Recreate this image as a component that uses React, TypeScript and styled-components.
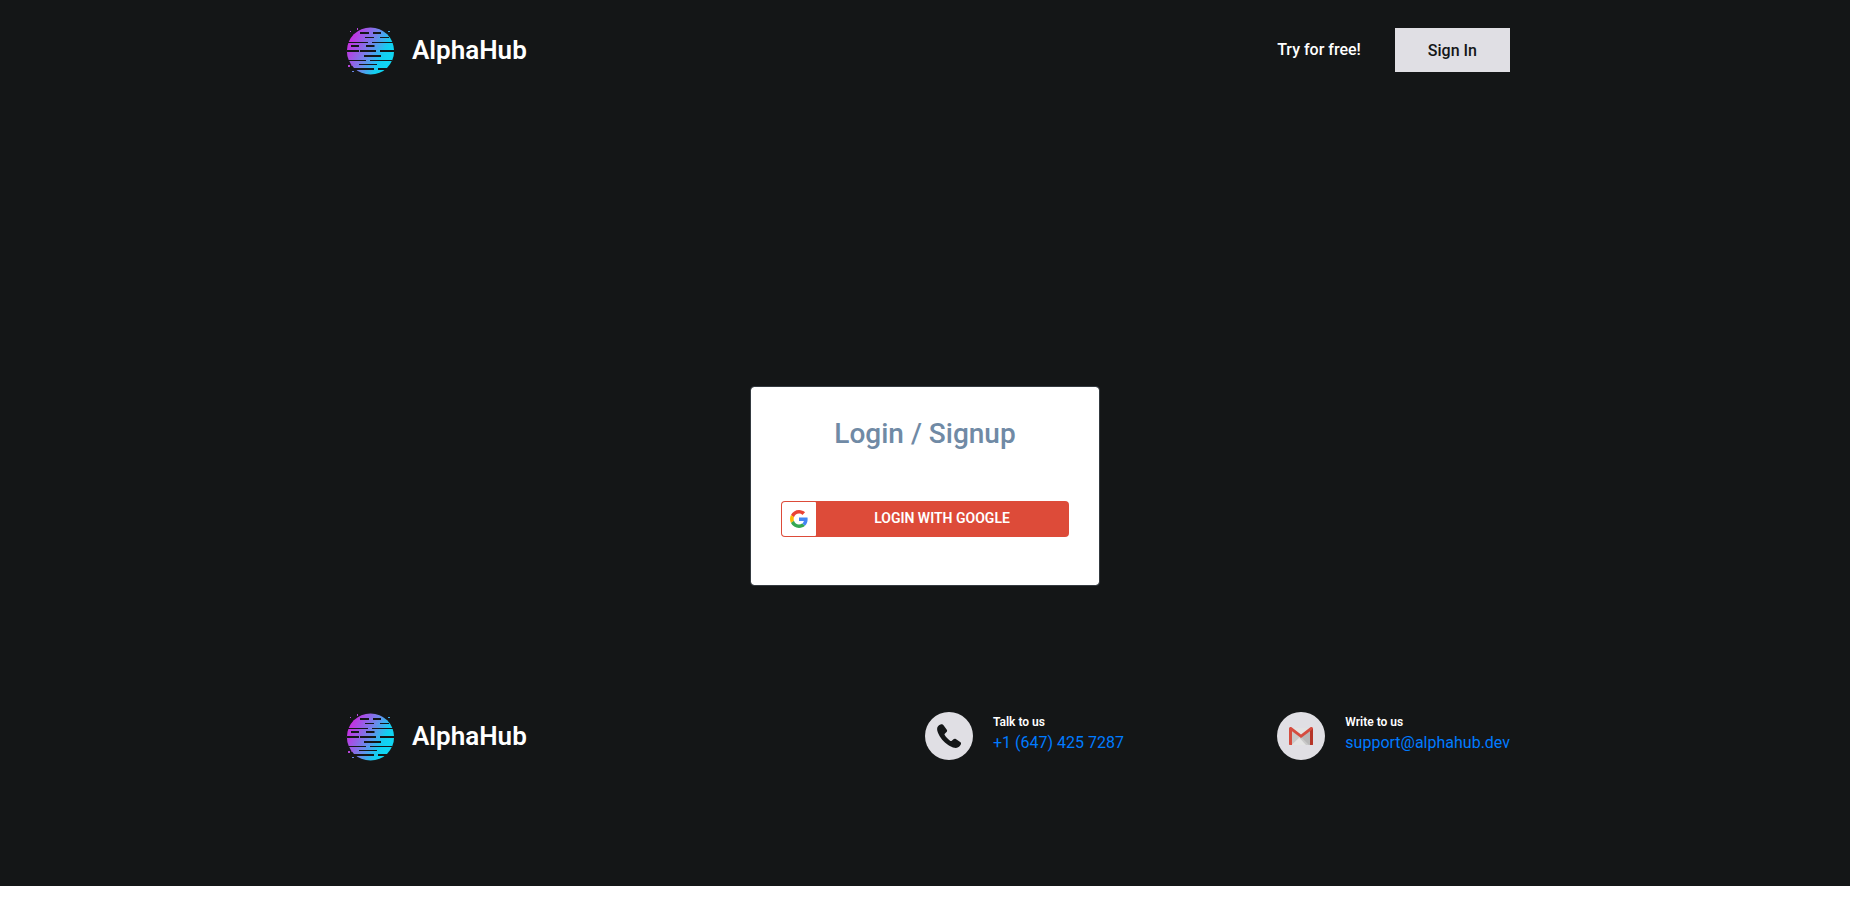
import React, { useId } from "react";
import styled, { createGlobalStyle } from "styled-components";

const GlobalStyle = createGlobalStyle`
  *, *::before, *::after { box-sizing: border-box; }
  body {
    margin: 0;
    background: #fff;
    color: #fff;
    font-family: Roboto, "Liberation Sans", sans-serif;
    font-size: 16px;
    line-height: 24px;
  }
`;

const Page = styled.div`
  background: #141617;
`;

const Container = styled.div`
  width: 100%;
  max-width: 1200px;
  margin: 0 auto;
  padding: 0 15px;
`;

const HeaderBar = styled(Container)`
  display: flex;
  align-items: center;
  justify-content: space-between;
  padding-top: 20px;
  padding-bottom: 20px;
`;

const BrandLink = styled.a`
  display: inline-flex;
  align-items: center;
  gap: 12px;
  color: #fff;
  font-size: 26px;
  font-weight: 600;
  line-height: 32px;
  text-decoration: none;
`;

const Nav = styled.nav`
  display: flex;
  align-items: center;
  gap: 34px;
`;

const NavLink = styled.a`
  color: #fff;
  font-weight: 500;
  text-decoration: none;
`;

const SignInButton = styled.button`
  height: 44px;
  padding: 2px 33px 0;
  border: 0;
  background: #e0dfe4;
  color: #141617;
  font: inherit;
  font-weight: 500;
  cursor: pointer;
`;

const Main = styled.main`
  display: flex;
  justify-content: center;
  padding: 286px 15px 120px;
`;

const Card = styled.section`
  width: 350px;
  padding: 29px 30px 48px;
  border: 1px solid #343a40;
  border-radius: 4px;
  background: #fff;
  background-clip: padding-box;
`;

const CardTitle = styled.h1`
  margin: 0 0 50px;
  color: #708aa5;
  font-size: 28px;
  font-weight: 500;
  line-height: 35px;
  text-align: center;
`;

const GoogleButton = styled.button`
  display: flex;
  align-items: center;
  width: 100%;
  height: 36px;
  padding: 1px;
  border: 0;
  border-radius: 4px;
  background: #dd4b39;
  color: #fff;
  font: inherit;
  font-size: 14px;
  font-weight: 600;
  line-height: 20px;
  text-transform: uppercase;
  cursor: pointer;
`;

const GoogleBadge = styled.span`
  display: flex;
  align-items: center;
  justify-content: center;
  width: 34px;
  height: 34px;
  border-radius: 3px 1px 1px 3px;
  background: #fff;
`;

const GoogleLabel = styled.span`
  flex: 1;
  padding-bottom: 2px;
  text-align: center;
`;

const FooterBar = styled(Container)`
  display: grid;
  grid-template-columns: 1fr 1fr;
  align-items: center;
  padding-bottom: 120px;
`;

const Contacts = styled.div`
  display: flex;
  justify-content: space-between;
`;

const Contact = styled.address`
  display: flex;
  align-items: center;
  gap: 20px;
  font-style: normal;
`;

const ContactIcon = styled.span`
  display: flex;
  align-items: center;
  justify-content: center;
  width: 48px;
  height: 48px;
  border-radius: 50%;
  background: #e0dfe4;
`;

const ContactText = styled.div`
  display: flex;
  flex-direction: column;
  padding-bottom: 4px;
`;

const ContactTitle = styled.span`
  font-size: 12px;
  font-weight: 600;
  line-height: 18px;
`;

const ContactLink = styled.a`
  color: #007bff;
  text-decoration: none;
`;

function Globe() {
  const id = useId();
  return (
    <svg width="60" height="60" viewBox="0 0 60 60" aria-hidden="true">
      <defs>
        <linearGradient id={id} gradientUnits="userSpaceOnUse" x1="11" y1="20" x2="48" y2="38">
          <stop offset="0" stopColor="#c233e2" />
          <stop offset="0.5" stopColor="#6f86ea" />
          <stop offset="0.85" stopColor="#14cdf0" />
          <stop offset="1" stopColor="#10d5f2" />
        </linearGradient>
      </defs>
      <circle cx="30.5" cy="31" r="23.6" fill={`url(#${id})`} />
      <path
        fill="#141617"
        d="M20 12h9v2h-9zM33 12h8v2h-8zM25 17h9v1h-9zM40 17h9v1h-9zM8 22h20v1H8zM32 22h21v1H32zM11 25h8v2h-8zM26 25h8.500v2H26zM7 30h12v2H7zM20 30h16v2H20zM40 30h15v2H40zM24 35h17v2H24zM8 40h18v1H8zM30 40h22v1H30zM19 44h18v1H19zM12 48h22v2H12zM38 48h9v2h-9z"
      />
      <path fill="#b645d8" d="M10 11h1v1h-1zM17 8h1v2h-1zM11 44.500h1.500v1H11zM8 45h2v2H8z" />
      <path fill="#6684e5" d="M12 51h2v1h-2z" />
      <path fill="#3dabe2" d="M48 11h2v1h-2z" />
    </svg>
  );
}

function Brand() {
  return (
    <BrandLink href="#">
      <Globe />
      AlphaHub
    </BrandLink>
  );
}

function GoogleIcon() {
  return (
    <svg width="18" height="18" viewBox="0 0 48 48" aria-hidden="true">
      <path fill="#EA4335" d="M24 9.500c3.540 0 6.710 1.220 9.210 3.600l6.850-6.850C35.900 2.380 30.470 0 24 0 14.620 0 6.510 5.380 2.560 13.220l7.980 6.190C12.430 13.720 17.740 9.500 24 9.500z" />
      <path fill="#4285F4" d="M46.980 24.550c0-1.570-.15-3.090-.38-4.550H24v9.020h12.940c-.58 2.960-2.260 5.480-4.780 7.180l7.730 6c4.510-4.180 7.090-10.360 7.090-17.650z" />
      <path fill="#FBBC05" d="M10.530 28.590c-.48-1.450-.76-2.990-.76-4.590s.27-3.140.76-4.590l-7.980-6.190C.92 16.460 0 20.120 0 24c0 3.880.92 7.540 2.560 10.780l7.970-6.190z" />
      <path fill="#34A853" d="M24 48c6.480 0 11.930-2.130 15.890-5.810l-7.730-6c-2.150 1.450-4.920 2.300-8.160 2.300-6.260 0-11.570-4.220-13.470-9.910l-7.980 6.190C6.510 42.620 14.620 48 24 48z" />
    </svg>
  );
}

function PhoneIcon() {
  return (
    <svg width="24" height="24" viewBox="0 0 24 24" aria-hidden="true">
      <path
        fill="#141617"
        d="M3.600.5C2 1 .1 2.400.1 5.100c0 3 2.500 8 6.300 11.900 4 4 9.200 7 12.600 6.900 2.300-.1 4.200-1.800 4.900-3.700.3-.9.100-1.700-.7-2.200l-4.400-2.900c-.8-.5-1.700-.4-2.300.2l-1.700 1.500c-.4.400-.9.400-1.400.1-1.900-1.200-4.400-3.700-5.700-5.900-.3-.5-.3-.9.100-1.300l1.700-1.600c.7-.6.8-1.500.3-2.300L6.700 1.500C6 .4 4.900.1 3.600.5z"
      />
    </svg>
  );
}

function GmailIcon() {
  return (
    <svg width="24" height="24" viewBox="0 0 24 24" aria-hidden="true">
      <path fill="#e3e3e3" d="M3 4h18v17H3z" />
      <path fill="#c9c9c9" d="M3 20.500 11 13l-8-6zM21 6l-9 7-1.500 1L17 21h4z" />
      <path fill="#b8b8b8" d="m12 13 8 8h1V7z" />
      <path fill="#d54c3f" d="M0 4.500C0 3 1.600 2.500 2.600 3.300L12 10.400l9.400-7.100C22.400 2.500 24 3 24 4.500V20c0 .7-.4 1-1 1h-2V7.300l-9 6.700-9-6.700V21H1c-.6 0-1-.3-1-1z" />
      <path fill="#b63528" d="m21 7.300 3-2.500V20c0 .7-.4 1-1 1h-2z" />
    </svg>
  );
}

export default function App() {
  return (
    <>
      <GlobalStyle />
      <Page>
        <header>
          <HeaderBar>
            <Brand />
            <Nav>
              <NavLink href="#">Try for free!</NavLink>
              <SignInButton type="button">Sign In</SignInButton>
            </Nav>
          </HeaderBar>
        </header>
        <Main>
          <Card>
            <CardTitle>Login / Signup</CardTitle>
            <GoogleButton type="button">
              <GoogleBadge>
                <GoogleIcon />
              </GoogleBadge>
              <GoogleLabel>Login with Google</GoogleLabel>
            </GoogleButton>
          </Card>
        </Main>
        <footer>
          <FooterBar>
            <Brand />
            <Contacts>
              <Contact>
                <ContactIcon>
                  <PhoneIcon />
                </ContactIcon>
                <ContactText>
                  <ContactTitle>Talk to us</ContactTitle>
                  <ContactLink href="tel:+16474257287">+1 (647) 425 7287</ContactLink>
                </ContactText>
              </Contact>
              <Contact>
                <ContactIcon>
                  <GmailIcon />
                </ContactIcon>
                <ContactText>
                  <ContactTitle>Write to us</ContactTitle>
                  <ContactLink href="mailto:support@alphahub.dev">support@alphahub.dev</ContactLink>
                </ContactText>
              </Contact>
            </Contacts>
          </FooterBar>
        </footer>
      </Page>
    </>
  );
}
